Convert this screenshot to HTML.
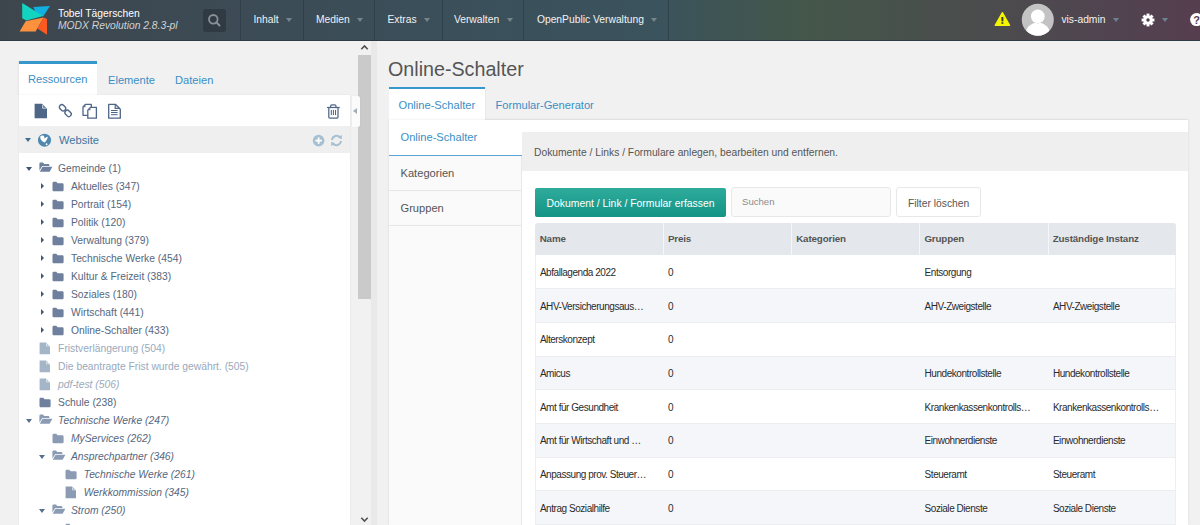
<!DOCTYPE html>
<html><head><meta charset="utf-8">
<style>
*{box-sizing:border-box;margin:0;padding:0}
html,body{width:1200px;height:525px;overflow:hidden;background:#f1f1f1;font-family:"Liberation Sans",sans-serif;position:relative}
.a{position:absolute;white-space:nowrap}
#hdr{position:absolute;left:0;top:0;width:1200px;height:41px;background:linear-gradient(to right,#3e464d 0%,#3c4b55 20%,#3a515c 45%,#3b535c 55%,#44574a 67%,#4b4c4d 82%,#4f4650 90%,#563e4f 100%);border-bottom:1px solid #2f3c46}
.sep{position:absolute;top:0;width:1px;height:40px;background:rgba(30,45,55,.4)}
.menu{position:absolute;top:14px;margin-left:0.4px;color:#f2f2f2;font-size:10.3px}
.caret{position:absolute;width:0;height:0;border-left:3.7px solid transparent;border-right:3.7px solid transparent;border-top:4px solid #78848c}
</style></head><body>
<div id="hdr">
  <svg class="a" style="left:15px;top:0" width="40" height="40" viewBox="15 0 40 40">
    <polygon points="33.3,6.9 50,6.1 43.2,16.4 36,13" fill="#10b0e0"/>
    <polygon points="22.2,3 43.2,16 26.4,20.6 22.2,18.3" fill="#12d4c0"/>
    <polygon points="25.7,21.3 43.6,17.5 35.6,31.6 19.6,31.6" fill="#fd913d"/>
    <polygon points="43.6,17.5 47,19 47,34.7 37.5,28.6" fill="#fc5a22"/>
  </svg>
  <div class="a" style="left:58px;top:8px;font-size:10.3px;color:#fff">Tobel Tägerschen</div>
  <div class="a" style="left:58px;top:20px;font-size:10.3px;color:#cfd3d6;font-style:italic">MODX Revolution 2.8.3-pl</div>
  <div class="a" style="left:203px;top:9px;width:23px;height:23px;border-radius:3px;background:#2f3a42"></div>
  <svg class="a" style="left:203px;top:9px" width="23" height="23" viewBox="0 0 23 23"><circle cx="10.3" cy="10.3" r="4.3" fill="none" stroke="#8b9196" stroke-width="1.8"/><line x1="13.4" y1="13.4" x2="16.5" y2="16.5" stroke="#8b9196" stroke-width="2" stroke-linecap="round"/></svg>
  <div class="sep" style="left:240px"></div>
  <div class="menu" style="left:253px">Inhalt</div><div class="caret" style="left:285.6px;top:18px"></div>
  <div class="sep" style="left:303px"></div>
  <div class="menu" style="left:315.5px">Medien</div><div class="caret" style="left:357.1px;top:18px"></div>
  <div class="sep" style="left:374px"></div>
  <div class="menu" style="left:387px">Extras</div><div class="caret" style="left:423.6px;top:18px"></div>
  <div class="sep" style="left:442px"></div>
  <div class="menu" style="left:453.5px">Verwalten</div><div class="caret" style="left:506.6px;top:18px"></div>
  <div class="sep" style="left:523px"></div>
  <div class="menu" style="left:536.5px">OpenPublic Verwaltung</div><div class="caret" style="left:650.6px;top:18px"></div>
  <div class="sep" style="left:668px"></div>
  <!-- right -->
  <svg class="a" style="left:993px;top:10px" width="19" height="18" viewBox="993 10 19 18"><polygon points="1002.4,12.6 1009.6,25.3 995.2,25.3" fill="#f5f500" stroke="#f5f500" stroke-linejoin="round" stroke-width="1.3"/><rect x="1001.4" y="17" width="2" height="4.3" fill="#3a3a30"/><rect x="1001.4" y="22.2" width="2" height="1.6" fill="#3a3a30"/></svg>
  <svg class="a" style="left:1021px;top:3px" width="34" height="34" viewBox="1021 3 34 34"><defs><clipPath id="cc"><circle cx="1037.8" cy="19.8" r="16"/></clipPath></defs><circle cx="1037.8" cy="19.8" r="16" fill="#c3c3c3"/><g clip-path="url(#cc)"><ellipse cx="1037.8" cy="35.5" rx="12.6" ry="13" fill="#fff"/><circle cx="1037.8" cy="16.3" r="7.1" fill="#c3c3c3"/><circle cx="1037.8" cy="16.3" r="6.9" fill="#fff"/></g></svg>
  <div class="menu" style="left:1061px">vis-admin</div><div class="caret" style="left:1113px;top:18px;border-top-color:#6b8491"></div>
  <svg class="a" style="left:1141.3px;top:12.6px" width="14" height="14" viewBox="-7 -7 14 14"><g fill="#fff"><circle r="4.6"/><g id="t"><rect x="-1.5" y="-6.4" width="3" height="3"/></g><use href="#t" transform="rotate(45)"/><use href="#t" transform="rotate(90)"/><use href="#t" transform="rotate(135)"/><use href="#t" transform="rotate(180)"/><use href="#t" transform="rotate(225)"/><use href="#t" transform="rotate(270)"/><use href="#t" transform="rotate(315)"/></g><circle r="1.7" fill="#4d3d48"/></svg>
  <div class="caret" style="left:1161.5px;top:18px;border-top-color:#6b8491"></div>
  <svg class="a" style="left:1190px;top:13px" width="14" height="14" viewBox="0 0 14 14"><circle cx="6.6" cy="6.6" r="6.5" fill="#fff"/><text x="6.6" y="10.6" text-anchor="middle" font-family="Liberation Sans" font-weight="bold" font-size="11" fill="#553e4e">?</text></svg>
</div>

<!-- LEFT -->
<div class="a" style="left:19px;top:61px;width:78px;height:34px;background:#fff;border-top:3px solid #3697cd;box-shadow:-1px 0 2px rgba(0,0,0,.06)"></div>
<div class="a" style="left:28px;top:73px;font-size:11.14px;color:#3a8fc5">Ressourcen</div>
<div class="a" style="left:108px;top:74px;font-size:11.14px;color:#3a8fc5">Elemente</div>
<div class="a" style="left:175px;top:74px;font-size:11.14px;color:#3a8fc5">Dateien</div>
<div class="a" style="left:19px;top:95px;width:331px;height:430px;background:#fff;box-shadow:0 0 2px rgba(0,0,0,.07)"></div>
<!-- toolbar icons -->
<svg class="a" style="left:34px;top:103px" width="14" height="16" viewBox="0 0 14 16"><path d="M0.6,0.8 H8 L13,5.8 V15.2 H0.6 Z" fill="#4e6688"/><path d="M8.4,1.6 L12.2,5.4 H8.4 Z" fill="#fff"/><path d="M9.2,2.2 L11.7,4.8 H9.2Z" fill="#4e6688"/></svg>
<svg class="a" style="left:58px;top:103px" width="15" height="16" viewBox="0 0 15 16"><g fill="none" stroke="#4e6688" stroke-width="1.4"><rect x="1.1" y="2.35" width="6.8" height="4.8" rx="2.3" transform="rotate(45 4.5 4.75)"/><rect x="6.7" y="8" width="6.8" height="4.8" rx="2.3" transform="rotate(45 10.1 10.4)"/></g></svg>
<svg class="a" style="left:82px;top:103px" width="16" height="16" viewBox="0 0 16 16"><g fill="#fff" stroke="#4e6688" stroke-width="1.3" stroke-linejoin="round"><path d="M3.6,1.3 H9.3 V12.3 H1 V4 Z"/><path d="M8.6,4.3 H14.4 V15.2 H5.8 V7.1 Z"/></g><path d="M3.4,2.2 V4.3 H1.5Z M8.4,5.2 V7.3 H6.4Z" fill="#4e6688"/></svg>
<svg class="a" style="left:107px;top:103px" width="15" height="16" viewBox="0 0 15 16"><path d="M1.7,1.3 H8.4 L13.3,6.2 V15.2 H1.7 Z" fill="none" stroke="#4e6688" stroke-width="1.3" stroke-linejoin="round"/><path d="M8.2,1.5 V5.4 H13" fill="none" stroke="#4e6688" stroke-width="1.2"/><g fill="#4e6688"><rect x="4" y="7" width="6.6" height="1"/><rect x="4" y="9" width="6.6" height="1"/><rect x="4" y="11.2" width="6.6" height="1"/></g></svg>
<svg class="a" style="left:326px;top:103px" width="15" height="16" viewBox="0 0 15 16"><g fill="none" stroke="#4e6688" stroke-width="1.25" stroke-linejoin="round"><path d="M1,4.5 H13.7"/><path d="M4.6,4.3 V3.2 Q4.6,1.8 6,1.8 H8.6 Q10,1.8 10,3.2 V4.3"/><path d="M2.8,4.6 V14 Q2.8,15 3.8,15 H11 Q12,15 12,14 V4.6"/></g><g fill="#4e6688"><rect x="4.8" y="6.9" width="1.05" height="5.2"/><rect x="6.9" y="6.9" width="1.05" height="5.2"/><rect x="9" y="6.9" width="1.05" height="5.2"/></g></svg>
<!-- website row -->
<div class="a" style="left:19px;top:126px;width:331px;height:27px;background:#efefef"></div>
<div class="a" style="left:24.5px;top:138px;width:0;height:0;border-left:3.8px solid transparent;border-right:3.8px solid transparent;border-top:4px solid #3f6f8f"></div>
<svg class="a" style="left:37px;top:133px" width="15" height="15" viewBox="0 0 15 15"><circle cx="7.5" cy="7.2" r="6.5" fill="#4f88ae"/><path d="M3.2,3.6 C4.2,2.6 5.8,2.4 6.6,2.8 C7.2,3.4 7.4,4.6 7.7,5.6 C8.4,4.8 9.4,3.6 10.8,3.7 C10.6,5 10.2,6.2 9.6,6.9 C8.9,7.9 8.3,8.8 7.7,9.6 C6.6,9.2 5.4,8.4 4.6,7.6 C3.9,6.9 3.3,5.9 3.4,5 Z" fill="#fff"/><circle cx="9.6" cy="11.2" r="0.95" fill="#fff"/></svg>
<div class="a" style="left:59px;top:133.6px;font-size:11.14px;color:#3d75a0">Website</div>
<svg class="a" style="left:312px;top:134px" width="13" height="13" viewBox="0 0 13 13"><circle cx="6.6" cy="6.6" r="5.8" fill="#a6c0d2"/><rect x="3.4" y="5.7" width="6.4" height="1.8" fill="#fff"/><rect x="5.7" y="3.4" width="1.8" height="6.4" fill="#fff"/></svg>
<svg class="a" style="left:330px;top:134px" width="13" height="13" viewBox="0 0 13 13"><g fill="none" stroke="#a6c0d2" stroke-width="1.9"><path d="M2,6 A4.6,4.6 0 0 1 10.2,3.6"/><path d="M11,7 A4.6,4.6 0 0 1 2.8,9.4"/></g><path d="M8,3.8 L11.8,0.8 L11.8,5.2 Z" fill="#a6c0d2"/><path d="M5,9.2 L1.2,12.2 L1.2,7.8 Z" fill="#a6c0d2"/></svg>
<!-- scrollbar -->
<div class="a" style="left:357px;top:41px;width:15px;height:484px;background:#f1f1f1"></div>
<div class="a" style="left:358px;top:54.5px;width:13px;height:244.5px;background:#cacaca"></div>
<svg class="a" style="left:357px;top:41px" width="15" height="12" viewBox="0 0 15 12"><path d="M4.3,8.2 L7.5,5 L10.7,8.2" fill="none" stroke="#505050" stroke-width="1.6"/></svg>
<svg class="a" style="left:357px;top:513px" width="15" height="12" viewBox="0 0 15 12"><path d="M4.3,4.8 L7.5,8 L10.7,4.8" fill="none" stroke="#505050" stroke-width="1.6"/></svg>
<div class="a" style="left:371px;top:41px;width:6px;height:484px;background:#e9e9e9"></div><!-- collapse tab -->
<div class="a" style="left:351.5px;top:96px;width:8.3px;height:31px;background:#fbfbfb;border-radius:0 2px 2px 0;box-shadow:0 0 1px rgba(0,0,0,.12)"></div>
<div class="a" style="left:353px;top:107.8px;width:0;height:0;border-top:3.3px solid transparent;border-bottom:3.3px solid transparent;border-right:4.2px solid #a3aeb8"></div>
<div class="a" style="left:26.1px;top:166.8px;width:0;height:0;border-left:3.3px solid transparent;border-right:3.3px solid transparent;border-top:4px solid #3f5673"></div><svg class="a" style="left:38.6px;top:162px" width="14" height="11" viewBox="0 0 14 11"><path d="M0.4,1.8 Q0.4,0.6 1.6,0.6 H4 L5.2,2 H9.2 Q10.4,2 10.4,3.2 V4 H3.2 L0.4,8.4 Z" fill="#6e809d"/><path d="M3.6,4.8 H13.4 L10.6,9.8 H0.8 Z" fill="#6e809d"/></svg><div class="a" style="left:58.1px;top:163.3px;font-size:10.3px;color:#55677e;">Gemeinde (1)</div>
<div class="a" style="left:40.7px;top:182.8px;width:0;height:0;border-top:3.2px solid transparent;border-bottom:3.2px solid transparent;border-left:3.5px solid #3f5673"></div><svg class="a" style="left:52.1px;top:181.2px" width="12" height="11" viewBox="0 0 12 11"><path d="M0.5,2 Q0.5,0.8 1.7,0.8 H4.3 L5.5,2.2 H10.4 Q11.6,2.2 11.6,3.4 V9 Q11.6,10.2 10.4,10.2 H1.7 Q0.5,10.2 0.5,9 Z" fill="#6e809d"/></svg><div class="a" style="left:71.0px;top:181.3px;font-size:10.3px;color:#55677e;">Aktuelles (347)</div>
<div class="a" style="left:40.7px;top:200.8px;width:0;height:0;border-top:3.2px solid transparent;border-bottom:3.2px solid transparent;border-left:3.5px solid #3f5673"></div><svg class="a" style="left:52.1px;top:199.2px" width="12" height="11" viewBox="0 0 12 11"><path d="M0.5,2 Q0.5,0.8 1.7,0.8 H4.3 L5.5,2.2 H10.4 Q11.6,2.2 11.6,3.4 V9 Q11.6,10.2 10.4,10.2 H1.7 Q0.5,10.2 0.5,9 Z" fill="#6e809d"/></svg><div class="a" style="left:71.0px;top:199.3px;font-size:10.3px;color:#55677e;">Portrait (154)</div>
<div class="a" style="left:40.7px;top:218.8px;width:0;height:0;border-top:3.2px solid transparent;border-bottom:3.2px solid transparent;border-left:3.5px solid #3f5673"></div><svg class="a" style="left:52.1px;top:217.2px" width="12" height="11" viewBox="0 0 12 11"><path d="M0.5,2 Q0.5,0.8 1.7,0.8 H4.3 L5.5,2.2 H10.4 Q11.6,2.2 11.6,3.4 V9 Q11.6,10.2 10.4,10.2 H1.7 Q0.5,10.2 0.5,9 Z" fill="#6e809d"/></svg><div class="a" style="left:71.0px;top:217.3px;font-size:10.3px;color:#55677e;">Politik (120)</div>
<div class="a" style="left:40.7px;top:236.8px;width:0;height:0;border-top:3.2px solid transparent;border-bottom:3.2px solid transparent;border-left:3.5px solid #3f5673"></div><svg class="a" style="left:52.1px;top:235.2px" width="12" height="11" viewBox="0 0 12 11"><path d="M0.5,2 Q0.5,0.8 1.7,0.8 H4.3 L5.5,2.2 H10.4 Q11.6,2.2 11.6,3.4 V9 Q11.6,10.2 10.4,10.2 H1.7 Q0.5,10.2 0.5,9 Z" fill="#6e809d"/></svg><div class="a" style="left:71.0px;top:235.3px;font-size:10.3px;color:#55677e;">Verwaltung (379)</div>
<div class="a" style="left:40.7px;top:254.8px;width:0;height:0;border-top:3.2px solid transparent;border-bottom:3.2px solid transparent;border-left:3.5px solid #3f5673"></div><svg class="a" style="left:52.1px;top:253.2px" width="12" height="11" viewBox="0 0 12 11"><path d="M0.5,2 Q0.5,0.8 1.7,0.8 H4.3 L5.5,2.2 H10.4 Q11.6,2.2 11.6,3.4 V9 Q11.6,10.2 10.4,10.2 H1.7 Q0.5,10.2 0.5,9 Z" fill="#6e809d"/></svg><div class="a" style="left:71.0px;top:253.3px;font-size:10.3px;color:#55677e;">Technische Werke (454)</div>
<div class="a" style="left:40.7px;top:272.8px;width:0;height:0;border-top:3.2px solid transparent;border-bottom:3.2px solid transparent;border-left:3.5px solid #3f5673"></div><svg class="a" style="left:52.1px;top:271.2px" width="12" height="11" viewBox="0 0 12 11"><path d="M0.5,2 Q0.5,0.8 1.7,0.8 H4.3 L5.5,2.2 H10.4 Q11.6,2.2 11.6,3.4 V9 Q11.6,10.2 10.4,10.2 H1.7 Q0.5,10.2 0.5,9 Z" fill="#6e809d"/></svg><div class="a" style="left:71.0px;top:271.3px;font-size:10.3px;color:#55677e;">Kultur &amp; Freizeit (383)</div>
<div class="a" style="left:40.7px;top:290.8px;width:0;height:0;border-top:3.2px solid transparent;border-bottom:3.2px solid transparent;border-left:3.5px solid #3f5673"></div><svg class="a" style="left:52.1px;top:289.2px" width="12" height="11" viewBox="0 0 12 11"><path d="M0.5,2 Q0.5,0.8 1.7,0.8 H4.3 L5.5,2.2 H10.4 Q11.6,2.2 11.6,3.4 V9 Q11.6,10.2 10.4,10.2 H1.7 Q0.5,10.2 0.5,9 Z" fill="#6e809d"/></svg><div class="a" style="left:71.0px;top:289.3px;font-size:10.3px;color:#55677e;">Soziales (180)</div>
<div class="a" style="left:40.7px;top:308.8px;width:0;height:0;border-top:3.2px solid transparent;border-bottom:3.2px solid transparent;border-left:3.5px solid #3f5673"></div><svg class="a" style="left:52.1px;top:307.2px" width="12" height="11" viewBox="0 0 12 11"><path d="M0.5,2 Q0.5,0.8 1.7,0.8 H4.3 L5.5,2.2 H10.4 Q11.6,2.2 11.6,3.4 V9 Q11.6,10.2 10.4,10.2 H1.7 Q0.5,10.2 0.5,9 Z" fill="#6e809d"/></svg><div class="a" style="left:71.0px;top:307.3px;font-size:10.3px;color:#55677e;">Wirtschaft (441)</div>
<div class="a" style="left:40.7px;top:326.8px;width:0;height:0;border-top:3.2px solid transparent;border-bottom:3.2px solid transparent;border-left:3.5px solid #3f5673"></div><svg class="a" style="left:52.1px;top:325.2px" width="12" height="11" viewBox="0 0 12 11"><path d="M0.5,2 Q0.5,0.8 1.7,0.8 H4.3 L5.5,2.2 H10.4 Q11.6,2.2 11.6,3.4 V9 Q11.6,10.2 10.4,10.2 H1.7 Q0.5,10.2 0.5,9 Z" fill="#6e809d"/></svg><div class="a" style="left:71.0px;top:325.3px;font-size:10.3px;color:#55677e;">Online-Schalter (433)</div>
<svg class="a" style="left:39.4px;top:342px" width="12" height="13" viewBox="0 0 12 13"><path d="M0.6,0.6 H7 L11,4.6 V12.2 H0.6 Z" fill="#a5b5c8"/><path d="M7.4,1.3 L10.4,4.3 H7.4 Z" fill="#fff"/><path d="M8,1.9 L9.8,3.8 H8Z" fill="#a5b5c8"/></svg><div class="a" style="left:58.1px;top:343.3px;font-size:10.3px;color:#98a9bd;">Fristverlängerung (504)</div>
<svg class="a" style="left:39.4px;top:360px" width="12" height="13" viewBox="0 0 12 13"><path d="M0.6,0.6 H7 L11,4.6 V12.2 H0.6 Z" fill="#a5b5c8"/><path d="M7.4,1.3 L10.4,4.3 H7.4 Z" fill="#fff"/><path d="M8,1.9 L9.8,3.8 H8Z" fill="#a5b5c8"/></svg><div class="a" style="left:58.1px;top:361.3px;font-size:10.3px;color:#98a9bd;">Die beantragte Frist wurde gewährt. (505)</div>
<svg class="a" style="left:39.4px;top:378px" width="12" height="13" viewBox="0 0 12 13"><path d="M0.6,0.6 H7 L11,4.6 V12.2 H0.6 Z" fill="#a5b5c8"/><path d="M7.4,1.3 L10.4,4.3 H7.4 Z" fill="#fff"/><path d="M8,1.9 L9.8,3.8 H8Z" fill="#a5b5c8"/></svg><div class="a" style="left:58.1px;top:379.3px;font-size:10.3px;color:#98a9bd;font-style:italic;">pdf-test (506)</div>
<svg class="a" style="left:39.2px;top:397.2px" width="12" height="11" viewBox="0 0 12 11"><path d="M0.5,2 Q0.5,0.8 1.7,0.8 H4.3 L5.5,2.2 H10.4 Q11.6,2.2 11.6,3.4 V9 Q11.6,10.2 10.4,10.2 H1.7 Q0.5,10.2 0.5,9 Z" fill="#6e809d"/></svg><div class="a" style="left:58.1px;top:397.3px;font-size:10.3px;color:#55677e;">Schule (238)</div>
<div class="a" style="left:26.1px;top:418.8px;width:0;height:0;border-left:3.3px solid transparent;border-right:3.3px solid transparent;border-top:4px solid #56708e"></div><svg class="a" style="left:38.6px;top:414px" width="14" height="11" viewBox="0 0 14 11"><path d="M0.4,1.8 Q0.4,0.6 1.6,0.6 H4 L5.2,2 H9.2 Q10.4,2 10.4,3.2 V4 H3.2 L0.4,8.4 Z" fill="#8a9bb3"/><path d="M3.6,4.8 H13.4 L10.6,9.8 H0.8 Z" fill="#8a9bb3"/></svg><div class="a" style="left:58.1px;top:415.3px;font-size:10.3px;color:#55677e;font-style:italic;">Technische Werke (247)</div>
<svg class="a" style="left:52.1px;top:433.2px" width="12" height="11" viewBox="0 0 12 11"><path d="M0.5,2 Q0.5,0.8 1.7,0.8 H4.3 L5.5,2.2 H10.4 Q11.6,2.2 11.6,3.4 V9 Q11.6,10.2 10.4,10.2 H1.7 Q0.5,10.2 0.5,9 Z" fill="#8a9bb3"/></svg><div class="a" style="left:71.0px;top:433.3px;font-size:10.3px;color:#55677e;font-style:italic;">MyServices (262)</div>
<div class="a" style="left:39.0px;top:454.8px;width:0;height:0;border-left:3.3px solid transparent;border-right:3.3px solid transparent;border-top:4px solid #56708e"></div><svg class="a" style="left:51.5px;top:450px" width="14" height="11" viewBox="0 0 14 11"><path d="M0.4,1.8 Q0.4,0.6 1.6,0.6 H4 L5.2,2 H9.2 Q10.4,2 10.4,3.2 V4 H3.2 L0.4,8.4 Z" fill="#8a9bb3"/><path d="M3.6,4.8 H13.4 L10.6,9.8 H0.8 Z" fill="#8a9bb3"/></svg><div class="a" style="left:71.0px;top:451.3px;font-size:10.3px;color:#55677e;font-style:italic;">Ansprechpartner (346)</div>
<svg class="a" style="left:64.9px;top:469.2px" width="12" height="11" viewBox="0 0 12 11"><path d="M0.5,2 Q0.5,0.8 1.7,0.8 H4.3 L5.5,2.2 H10.4 Q11.6,2.2 11.6,3.4 V9 Q11.6,10.2 10.4,10.2 H1.7 Q0.5,10.2 0.5,9 Z" fill="#8a9bb3"/></svg><div class="a" style="left:83.8px;top:469.3px;font-size:10.3px;color:#55677e;font-style:italic;">Technische Werke (261)</div>
<svg class="a" style="left:65.1px;top:486px" width="12" height="13" viewBox="0 0 12 13"><path d="M0.6,0.6 H7 L11,4.6 V12.2 H0.6 Z" fill="#8a9bb3"/><path d="M7.4,1.3 L10.4,4.3 H7.4 Z" fill="#fff"/><path d="M8,1.9 L9.8,3.8 H8Z" fill="#8a9bb3"/></svg><div class="a" style="left:83.8px;top:487.3px;font-size:10.3px;color:#55677e;font-style:italic;">Werkkommission (345)</div>
<div class="a" style="left:39.0px;top:508.8px;width:0;height:0;border-left:3.3px solid transparent;border-right:3.3px solid transparent;border-top:4px solid #56708e"></div><svg class="a" style="left:51.5px;top:504px" width="14" height="11" viewBox="0 0 14 11"><path d="M0.4,1.8 Q0.4,0.6 1.6,0.6 H4 L5.2,2 H9.2 Q10.4,2 10.4,3.2 V4 H3.2 L0.4,8.4 Z" fill="#8a9bb3"/><path d="M3.6,4.8 H13.4 L10.6,9.8 H0.8 Z" fill="#8a9bb3"/></svg><div class="a" style="left:71.0px;top:505.3px;font-size:10.3px;color:#55677e;font-style:italic;">Strom (250)</div>
<svg class="a" style="left:64.9px;top:523.2px" width="12" height="11" viewBox="0 0 12 11"><path d="M0.5,2 Q0.5,0.8 1.7,0.8 H4.3 L5.5,2.2 H10.4 Q11.6,2.2 11.6,3.4 V9 Q11.6,10.2 10.4,10.2 H1.7 Q0.5,10.2 0.5,9 Z" fill="#8a9bb3"/></svg>
<!-- MAIN -->
<div class="a" style="left:388px;top:57.7px;font-size:19.7px;color:#555">Online-Schalter</div>
<div class="a" style="left:389px;top:86.5px;width:95.5px;height:33.5px;background:#fff;border-top:2.7px solid #3697cd;box-shadow:1px 0 0 #e9e9e9"></div>
<div class="a" style="left:485px;top:119px;width:703px;height:1px;background:#e9e9e9"></div>
<div class="a" style="left:398.5px;top:98.5px;font-size:11.14px;color:#3a8fc5">Online-Schalter</div>
<div class="a" style="left:495.5px;top:99px;font-size:11.14px;color:#3a8fc5">Formular-Generator</div>
<div class="a" style="left:389px;top:120px;width:799px;height:405px;background:#fff;box-shadow:0 0 3px rgba(0,0,0,.09)"></div>
<div class="a" style="left:389px;top:156px;width:133px;height:369px;background:#fafafa;border-right:1px solid #e8e8e8"></div>
<div class="a" style="left:389px;top:155px;width:133px;height:1px;background:#5ba6d6"></div>
<div class="a" style="left:389px;top:190px;width:133px;height:1px;background:#e6e6e6"></div>
<div class="a" style="left:389px;top:225px;width:133px;height:1px;background:#e6e6e6"></div>
<div class="a" style="left:400.5px;top:131.2px;font-size:11.14px;color:#3a8fc5">Online-Schalter</div>
<div class="a" style="left:400.5px;top:166.5px;font-size:11.14px;color:#555">Kategorien</div>
<div class="a" style="left:400.5px;top:201.8px;font-size:11.14px;color:#555">Gruppen</div>
<div class="a" style="left:522px;top:132px;width:666px;height:39px;background:#efefef"></div>
<div class="a" style="left:534px;top:147px;font-size:10.3px;color:#555">Dokumente / Links / Formulare anlegen, bearbeiten und entfernen.</div>
<div class="a" style="left:535px;top:188px;width:190.5px;height:28.5px;border-radius:2px;background:linear-gradient(#2eab9b,#139486)"></div>
<div class="a" style="left:546.5px;top:197.7px;font-size:10.4px;color:#fff">Dokument / Link / Formular erfassen</div>
<div class="a" style="left:731px;top:187.2px;width:160px;height:29.8px;border-radius:3px;background:#fafafa;border:1px solid #e8e8e8"></div>
<div class="a" style="left:742px;top:196.2px;font-size:9.6px;color:#8c8c8c">Suchen</div>
<div class="a" style="left:896px;top:187.2px;width:85px;height:29.8px;border-radius:3px;background:#fff;border:1px solid #e8e8e8"></div>
<div class="a" style="left:908px;top:197.8px;font-size:10.3px;color:#555">Filter löschen</div>
<div class="a" style="left:534.7px;top:223px;width:641.2px;height:32px;background:#e4e8ec;border-radius:3px 3px 0 0"></div>
<div class="a" style="left:539.7px;top:233.1px;font-size:9.8px;letter-spacing:-0.15px;font-weight:bold;color:#555">Name</div>
<div class="a" style="left:662.9px;top:223px;width:1px;height:32px;background:#f4f6f8"></div>
<div class="a" style="left:667.9px;top:233.1px;font-size:9.8px;letter-spacing:-0.15px;font-weight:bold;color:#555">Preis</div>
<div class="a" style="left:791.2px;top:223px;width:1px;height:32px;background:#f4f6f8"></div>
<div class="a" style="left:796.2px;top:233.1px;font-size:9.8px;letter-spacing:-0.15px;font-weight:bold;color:#555">Kategorien</div>
<div class="a" style="left:919.4px;top:223px;width:1px;height:32px;background:#f4f6f8"></div>
<div class="a" style="left:924.4px;top:233.1px;font-size:9.8px;letter-spacing:-0.15px;font-weight:bold;color:#555">Gruppen</div>
<div class="a" style="left:1047.7px;top:223px;width:1px;height:32px;background:#f4f6f8"></div>
<div class="a" style="left:1052.7px;top:233.1px;font-size:9.8px;letter-spacing:-0.15px;font-weight:bold;color:#555">Zuständige Instanz</div>
<div class="a" style="left:534.7px;top:255.63px;width:641.2px;height:33.67px;background:#fff;border-bottom:1px solid #ebedf0"></div>
<div class="a" style="left:539.9px;top:266.8px;font-size:10px;letter-spacing:-0.45px;color:#2b2b2b">Abfallagenda 2022</div>
<div class="a" style="left:668.1px;top:266.8px;font-size:10px;letter-spacing:-0.45px;color:#2b2b2b">0</div>
<div class="a" style="left:924.6px;top:266.8px;font-size:10px;letter-spacing:-0.45px;color:#2b2b2b">Entsorgung</div>
<div class="a" style="left:534.7px;top:289.30px;width:641.2px;height:33.67px;background:#f5f6f9;border-bottom:1px solid #ebedf0"></div>
<div class="a" style="left:539.9px;top:300.5px;font-size:10px;letter-spacing:-0.45px;color:#2b2b2b">AHV-Versicherungsaus…</div>
<div class="a" style="left:668.1px;top:300.5px;font-size:10px;letter-spacing:-0.45px;color:#2b2b2b">0</div>
<div class="a" style="left:924.6px;top:300.5px;font-size:10px;letter-spacing:-0.45px;color:#2b2b2b">AHV-Zweigstelle</div>
<div class="a" style="left:1052.9px;top:300.5px;font-size:10px;letter-spacing:-0.45px;color:#2b2b2b">AHV-Zweigstelle</div>
<div class="a" style="left:534.7px;top:322.97px;width:641.2px;height:33.67px;background:#fff;border-bottom:1px solid #ebedf0"></div>
<div class="a" style="left:539.9px;top:334.2px;font-size:10px;letter-spacing:-0.45px;color:#2b2b2b">Alterskonzept</div>
<div class="a" style="left:668.1px;top:334.2px;font-size:10px;letter-spacing:-0.45px;color:#2b2b2b">0</div>
<div class="a" style="left:534.7px;top:356.64px;width:641.2px;height:33.67px;background:#f5f6f9;border-bottom:1px solid #ebedf0"></div>
<div class="a" style="left:539.9px;top:367.8px;font-size:10px;letter-spacing:-0.45px;color:#2b2b2b">Amicus</div>
<div class="a" style="left:668.1px;top:367.8px;font-size:10px;letter-spacing:-0.45px;color:#2b2b2b">0</div>
<div class="a" style="left:924.6px;top:367.8px;font-size:10px;letter-spacing:-0.45px;color:#2b2b2b">Hundekontrollstelle</div>
<div class="a" style="left:1052.9px;top:367.8px;font-size:10px;letter-spacing:-0.45px;color:#2b2b2b">Hundekontrollstelle</div>
<div class="a" style="left:534.7px;top:390.31px;width:641.2px;height:33.67px;background:#fff;border-bottom:1px solid #ebedf0"></div>
<div class="a" style="left:539.9px;top:401.5px;font-size:10px;letter-spacing:-0.45px;color:#2b2b2b">Amt für Gesundheit</div>
<div class="a" style="left:668.1px;top:401.5px;font-size:10px;letter-spacing:-0.45px;color:#2b2b2b">0</div>
<div class="a" style="left:924.6px;top:401.5px;font-size:10px;letter-spacing:-0.45px;color:#2b2b2b">Krankenkassenkontrolls…</div>
<div class="a" style="left:1052.9px;top:401.5px;font-size:10px;letter-spacing:-0.45px;color:#2b2b2b">Krankenkassenkontrolls…</div>
<div class="a" style="left:534.7px;top:423.98px;width:641.2px;height:33.67px;background:#f5f6f9;border-bottom:1px solid #ebedf0"></div>
<div class="a" style="left:539.9px;top:435.2px;font-size:10px;letter-spacing:-0.45px;color:#2b2b2b">Amt für Wirtschaft und …</div>
<div class="a" style="left:668.1px;top:435.2px;font-size:10px;letter-spacing:-0.45px;color:#2b2b2b">0</div>
<div class="a" style="left:924.6px;top:435.2px;font-size:10px;letter-spacing:-0.45px;color:#2b2b2b">Einwohnerdienste</div>
<div class="a" style="left:1052.9px;top:435.2px;font-size:10px;letter-spacing:-0.45px;color:#2b2b2b">Einwohnerdienste</div>
<div class="a" style="left:534.7px;top:457.65px;width:641.2px;height:33.67px;background:#fff;border-bottom:1px solid #ebedf0"></div>
<div class="a" style="left:539.9px;top:468.8px;font-size:10px;letter-spacing:-0.45px;color:#2b2b2b">Anpassung prov. Steuer…</div>
<div class="a" style="left:668.1px;top:468.8px;font-size:10px;letter-spacing:-0.45px;color:#2b2b2b">0</div>
<div class="a" style="left:924.6px;top:468.8px;font-size:10px;letter-spacing:-0.45px;color:#2b2b2b">Steueramt</div>
<div class="a" style="left:1052.9px;top:468.8px;font-size:10px;letter-spacing:-0.45px;color:#2b2b2b">Steueramt</div>
<div class="a" style="left:534.7px;top:491.32px;width:641.2px;height:33.67px;background:#f5f6f9;border-bottom:1px solid #ebedf0"></div>
<div class="a" style="left:539.9px;top:502.5px;font-size:10px;letter-spacing:-0.45px;color:#2b2b2b">Antrag Sozialhilfe</div>
<div class="a" style="left:668.1px;top:502.5px;font-size:10px;letter-spacing:-0.45px;color:#2b2b2b">0</div>
<div class="a" style="left:924.6px;top:502.5px;font-size:10px;letter-spacing:-0.45px;color:#2b2b2b">Soziale Dienste</div>
<div class="a" style="left:1052.9px;top:502.5px;font-size:10px;letter-spacing:-0.45px;color:#2b2b2b">Soziale Dienste</div>
<div class="a" style="left:534.7px;top:255px;width:641.2px;height:270px;border-left:1px solid #eceef1;border-right:1px solid #eceef1"></div>

</body></html>
